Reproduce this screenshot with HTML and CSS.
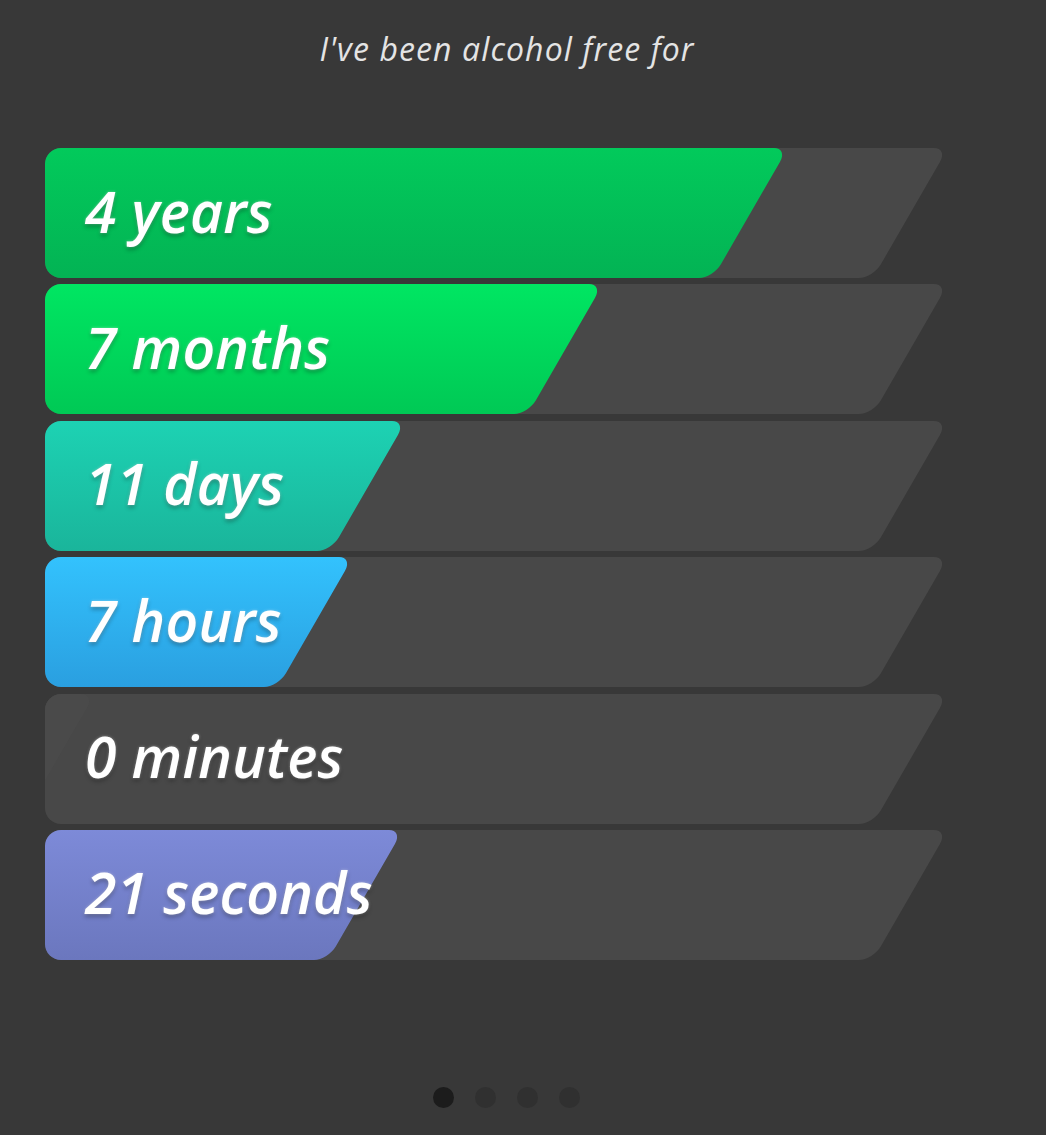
FILE: index.html
```html
<!DOCTYPE html>
<html>
<head>
  <title>Alcohol free</title>
  <link rel="stylesheet" href="styles.css">
</head>
<body>
  <main class="screen">
    <h1 class="title">I've been alcohol free for</h1>

    <section class="bars">
      <div class="bar">
        <div class="track"><div class="fill years" style="width: 843px"></div></div>
        <span class="label">4 years</span>
      </div>
      <div class="bar">
        <div class="track"><div class="fill months" style="width: 658px"></div></div>
        <span class="label">7 months</span>
      </div>
      <div class="bar">
        <div class="track"><div class="fill days" style="width: 461px"></div></div>
        <span class="label">11 days</span>
      </div>
      <div class="bar">
        <div class="track"><div class="fill hours" style="width: 408px"></div></div>
        <span class="label">7 hours</span>
      </div>
      <div class="bar">
        <div class="track"><div class="fill minutes" style="width: 150px"></div></div>
        <span class="label">0 minutes</span>
      </div>
      <div class="bar">
        <div class="track"><div class="fill seconds" style="width: 458px"></div></div>
        <span class="label">21 seconds</span>
      </div>
    </section>

    <div class="dots">
      <span class="dot active"></span>
      <span class="dot"></span>
      <span class="dot"></span>
      <span class="dot"></span>
    </div>
  </main>
</body>
</html>
```

FILE: styles.css
```css
* { margin: 0; padding: 0; box-sizing: border-box; }
html, body {
  background: #383838;
  height: 100%;
}
body {
  font-family: 'Open Sans', 'Liberation Sans', sans-serif;
  color: #fff;
}
.screen {
  display: flex;
  flex-direction: column;
  min-height: 1135px;
}
.title {
  font-size: 32px;
  font-style: italic;
  font-weight: 500;
  color: #e4e4e4;
  text-align: center;
  padding: 27px 32px 0 0;
  line-height: 44px;
  letter-spacing: 1.1px;
}
.bars {
  display: flex;
  flex-direction: column;
  gap: 6.4px;
  width: 897px;
  margin: 77px 0 0 45px;
}
.bar {
  position: relative;
  height: 130px;
  display: flex;
  align-items: center;
  padding-left: 40px;
  border-radius: 16px 0 0 16px;
  overflow: hidden;
}
.track {
  position: absolute;
  top: 0;
  left: -100px;
  width: 1003px;
  height: 100%;
  background: #484848;
  border-radius: 14px;
  transform: skewX(-30deg);
  transform-origin: top left;
  overflow: hidden;
}
.fill {
  height: 100%;
  border-radius: 0 14px 14px 0;
}
.fill.years { background: linear-gradient(to bottom, #02ca5b, #03b354); }
.fill.months { background: linear-gradient(to bottom, #00e662, #00c955); }
.fill.days { background: linear-gradient(to bottom, #1dd2b3, #1ab59b); }
.fill.hours { background: linear-gradient(to bottom, #33c2fd, #2a9fe0); }
.fill.minutes { background: #4a4a4a; }
.fill.seconds { background: linear-gradient(to bottom, #7d8ad8, #6b77be); }
.label {
  position: relative;
  font-size: 57px;
  font-style: italic;
  font-weight: 600;
  letter-spacing: 0.2px;
  line-height: 1;
  padding-bottom: 4px;
  text-shadow: 0 3px 4px rgba(0, 0, 0, 0.28), 0 0 3px rgba(255, 255, 255, 0.45);
}
.dots {
  display: flex;
  justify-content: center;
  gap: 21px;
  margin-top: auto;
  padding: 0 34px 27px 0;
}
.dot {
  width: 21px;
  height: 21px;
  border-radius: 50%;
  background: #303030;
}
.dot.active { background: #1c1c1c; }
```
